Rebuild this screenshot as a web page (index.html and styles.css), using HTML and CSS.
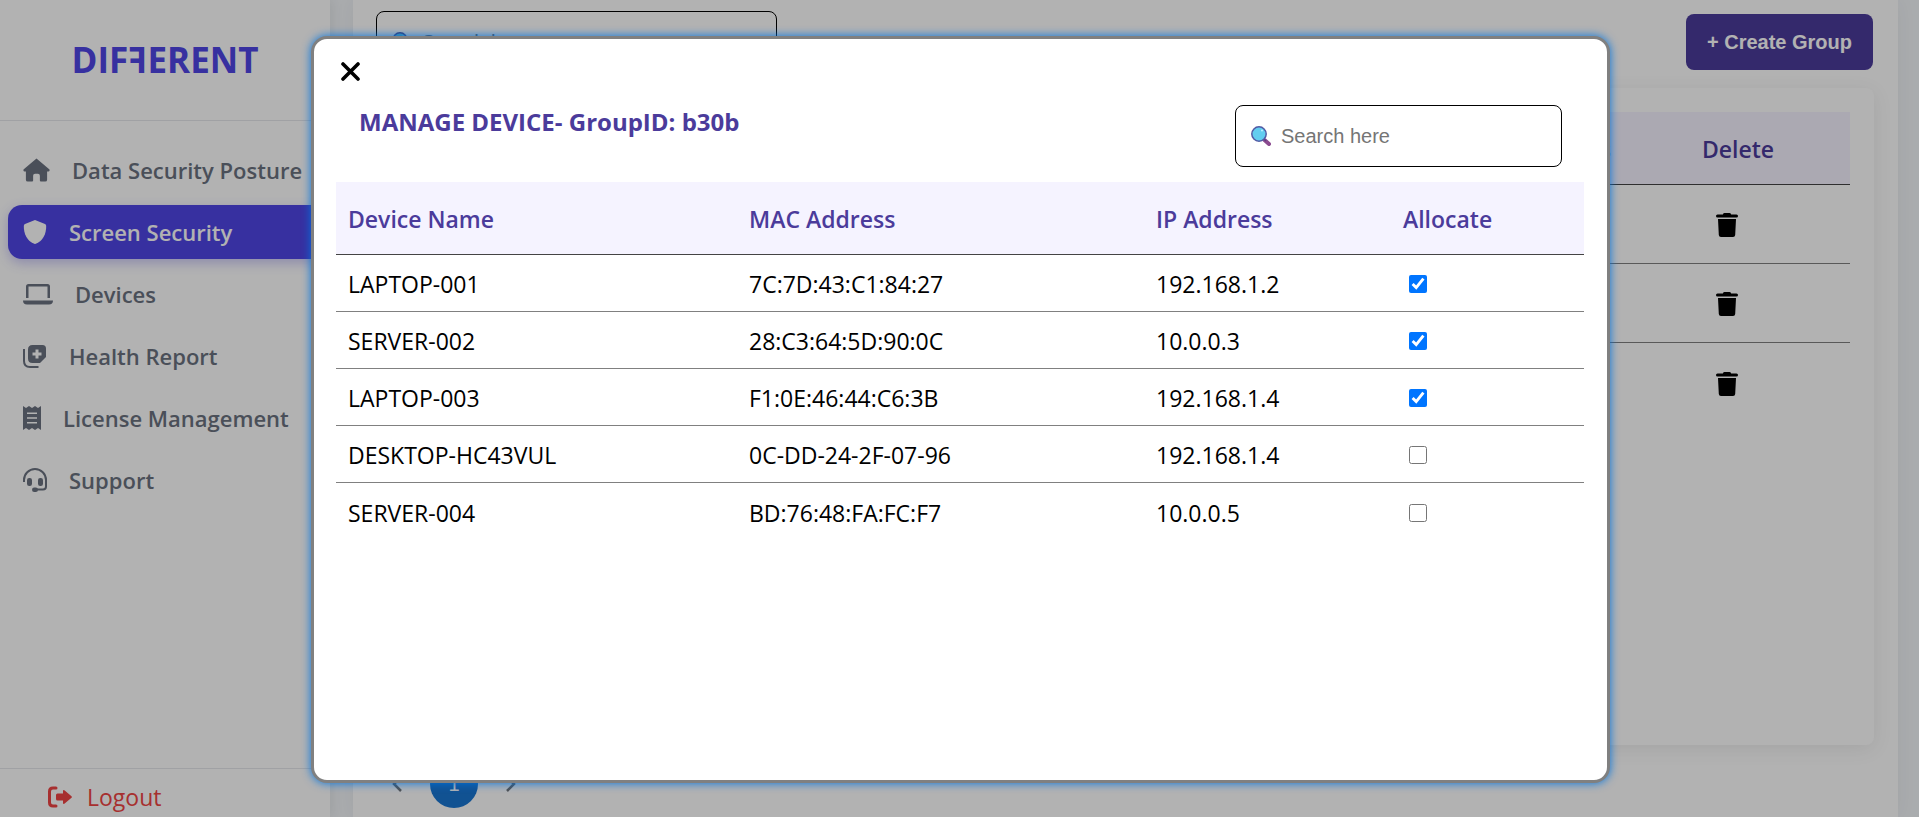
FILE: index.html
```html
<!DOCTYPE html>
<html lang="en">
<head>
<meta charset="utf-8">
<title>Screen Security</title>
<link rel="stylesheet" href="styles.css">
</head>
<body>
<svg class="sprite" aria-hidden="true">
  <symbol id="trash" viewBox="0 0 22 24"><path d="M7 1.200Q7.300 0 8.500 0h5q1.200 0 1.500 1.200L15.200 1.500H20.500Q22 1.500 22 3T20.500 4.500h-19Q0 4.500 0 3T1.500 1.500H6.800zM2 6h18l-.8 16q-.2 2-2.200 2H5q-2 0-2.200-2z"/></symbol>
  <symbol id="lens" viewBox="0 0 20 20"><path d="M13.500 14l4.500 4" stroke="#8b4a8f" stroke-width="4" stroke-linecap="round"/><path d="M12 12l3 3" stroke="#5d3f80" stroke-width="1.500"/><circle cx="8" cy="8" r="7.200" fill="#62cdf0" stroke="#515aa5" stroke-width="1.500"/><circle cx="11" cy="4.500" r="1" fill="#bdf0ff"/></symbol>
</svg>
<div class="app">
  <aside class="sidebar">
    <div class="brand"><span>DIF</span><span class="mirror">F</span><span>ERENT</span></div>
    <nav class="nav">
      <a class="item" href="#posture">
        <svg width="27" height="24" viewBox="0 0 28 24"><path d="M14 0L27.500 11.500Q28 13.500 26.500 13.500H25V22q0 2-2 2h-4.500q-1 0-1-1v-5q0-2-2-2h-3q-2 0-2 2v5q0 1-1 1H5q-2 0-2-2V13.500H1.500Q0 13.500.500 11.500z"/></svg>
        <span>Data Security Posture</span></a>
      <a class="item active" href="#screen">
        <svg width="24" height="24" viewBox="0 0 24 24"><path d="M12 0l10 4q1.200.600 1.200 2C23.200 14 20 21 12.800 23.800q-.8.300-1.600 0C4 21 .800 14 .800 6q0-1.400 1.200-2z"/></svg>
        <span>Screen Security</span></a>
      <a class="item" href="#devices">
        <svg width="30" height="24" viewBox="0 0 30 24"><path d="M3 16V4.500Q3 2 5.500 2h19Q27 2 27 4.500V16h-2.500V4.500h-19V16zM0 18.500h30q0 4-4 4H4q-4 0-4-4z"/></svg>
        <span>Devices</span></a>
      <a class="item" href="#health">
        <svg width="24" height="24" viewBox="0 0 24 24"><path fill-rule="evenodd" d="M9.500 1H19.500Q23 1 23 4.500V13l-6 6H9.500Q5 19 5 14.500V5.500Q5 1 9.500 1zM12.500 5.500v3h-3v3h3v3h3v-3h3v-3h-3v-3z"/><path d="M1 5v12q0 6 6 6h8.500" fill="none" stroke="currentColor" stroke-width="2"/></svg>
        <span>Health Report</span></a>
      <a class="item" href="#license">
        <svg width="18" height="24" viewBox="0 0 18 24"><path fill-rule="evenodd" d="M0 0l3 2 3-2 3 2 3-2 3 2 3-2v24l-3-2-3 2-3-2-3 2-3-2-3 2zM4 6.500v1.500h10V6.500zM4 11.200v1.500h10v-1.500zM4 16v1.500h10V16z"/></svg>
        <span>License Management</span></a>
      <a class="item" href="#support">
        <svg width="24" height="24" viewBox="0 0 24 24"><path d="M1 14v-2a11 11 0 0 1 22 0v6.500q0 3-3 3h-6" fill="none" stroke="currentColor" stroke-width="2"/><rect x="4" y="10" width="5" height="8" rx="2.200"/><rect x="15" y="10" width="5" height="8" rx="2.200"/><rect x="9" y="19.500" width="6" height="4.500" rx="2.200"/></svg>
        <span>Support</span></a>
    </nav>
    <div class="foot"><a class="logout" href="#logout">
      <svg width="24" height="24" viewBox="0 0 24 24"><path d="M8 3H5Q1.500 3 1.500 6.500v11Q1.500 21 5 21h3" fill="none" stroke="currentColor" stroke-width="3" stroke-linecap="round"/><path d="M15 5.500q.8-.9 1.700 0l6.800 5.700q.8.800 0 1.600l-6.800 5.700q-.9.900-1.700 0V15.500H9.500Q8 15.500 8 14v-4q0-1.500 1.500-1.500H15z"/></svg>
      <span>Logout</span></a></div>
  </aside>
  <main class="panel">
    <div class="toolbar">
      <label class="search wide"><svg width="20" height="20"><use href="#lens"/></svg><input type="text" placeholder="Search here" aria-label="Search groups"></label>
      <button class="create" type="button">+ Create Group</button>
    </div>
    <section class="card">
      <table class="groups">
        <colgroup><col><col class="c-devices"><col class="c-delete"></colgroup>
        <thead><tr><th></th><th class="end">Devices</th><th class="del">Delete</th></tr></thead>
        <tbody>
          <tr><td></td><td></td><td class="del"><button class="icon" type="button" aria-label="Delete group"><svg width="22" height="24"><use href="#trash"/></svg></button></td></tr>
          <tr><td></td><td></td><td class="del"><button class="icon" type="button" aria-label="Delete group"><svg width="22" height="24"><use href="#trash"/></svg></button></td></tr>
          <tr><td></td><td></td><td class="del"><button class="icon" type="button" aria-label="Delete group"><svg width="22" height="24"><use href="#trash"/></svg></button></td></tr>
        </tbody>
      </table>
    </section>
    <nav class="pager" aria-label="Pages">
      <button type="button" aria-label="Previous page"><svg width="12" height="18" viewBox="0 0 12 18"><path d="M10 2L3 9l7 7" fill="none" stroke="#757575" stroke-width="2.500"/></svg></button>
      <button type="button" class="current">1</button>
      <button type="button" aria-label="Next page"><svg width="12" height="18" viewBox="0 0 12 18"><path d="M2 2l7 7-7 7" fill="none" stroke="#757575" stroke-width="2.500"/></svg></button>
    </nav>
  </main>
</div>
<div class="overlay">
  <div class="modal" role="dialog" aria-modal="true" aria-labelledby="title">
    <button class="icon close" type="button" aria-label="Close"><svg width="19" height="19" viewBox="0 0 19 19"><path d="M2 2l15 15M17 2L2 17" stroke="#000" stroke-width="3.600" stroke-linecap="round"/></svg></button>
    <div class="head">
      <h2 id="title">MANAGE DEVICE- GroupID: b30b</h2>
      <label class="search"><svg width="20" height="20"><use href="#lens"/></svg><input type="text" placeholder="Search here" aria-label="Search devices"></label>
    </div>
    <table class="devices">
      <colgroup><col class="d-name"><col class="d-mac"><col class="d-ip"><col class="d-alloc"></colgroup>
      <thead><tr><th>Device Name</th><th>MAC Address</th><th>IP Address</th><th>Allocate</th></tr></thead>
      <tbody>
        <tr><td>LAPTOP-001</td><td>7C:7D:43:C1:84:27</td><td>192.168.1.2</td><td><input type="checkbox" aria-label="Allocate LAPTOP-001" checked></td></tr>
        <tr><td>SERVER-002</td><td>28:C3:64:5D:90:0C</td><td>10.0.0.3</td><td><input type="checkbox" aria-label="Allocate SERVER-002" checked></td></tr>
        <tr><td>LAPTOP-003</td><td>F1:0E:46:44:C6:3B</td><td>192.168.1.4</td><td><input type="checkbox" aria-label="Allocate LAPTOP-003" checked></td></tr>
        <tr><td>DESKTOP-HC43VUL</td><td>0C-DD-24-2F-07-96</td><td>192.168.1.4</td><td><input type="checkbox" aria-label="Allocate DESKTOP-HC43VUL"></td></tr>
        <tr><td>SERVER-004</td><td>BD:76:48:FA:FC:F7</td><td>10.0.0.5</td><td><input type="checkbox" aria-label="Allocate SERVER-004"></td></tr>
      </tbody>
    </table>
  </div>
</div>
</body>
</html>
```
FILE: styles.css
```css
* { box-sizing: border-box; }
body {
  margin: 0;
  background: #f3f6f9;
  color: #000;
  font-family: "Segoe UI", "Open Sans", "Noto Sans", sans-serif;
  font-size: 23px;
  overflow: hidden;
}
button, input { font-family: "Liberation Sans", Arial, sans-serif; }
.sprite { position: absolute; width: 0; height: 0; }
svg { display: block; flex: none; fill: currentColor; }

.app { display: flex; height: 100vh; padding-right: 21px; }

.sidebar {
  display: flex;
  flex-direction: column;
  flex: none;
  width: 330px;
  background: #fff;
  box-shadow: 2px 0 12px rgba(0, 0, 0, .08);
}
.brand {
  display: flex;
  justify-content: center;
  align-items: center;
  height: 121px;
  padding-bottom: 2px;
  border-bottom: 1px solid #e5e7eb;
  color: #4f46e5;
  font-size: 35px;
  font-weight: 700;
}
.mirror { transform: scaleX(-1); }
.nav {
  display: flex;
  flex-direction: column;
  flex: 1;
  gap: 8px;
  padding: 22px 0 0 8px;
}
.item {
  display: flex;
  align-items: center;
  gap: 22px;
  height: 54px;
  padding-left: 15px;
  border-radius: 14px;
  color: #6b7280;
  font-size: 22px;
  font-weight: 600;
  text-decoration: none;
  white-space: nowrap;
}
.active { background: #4f46e5; color: #fff; box-shadow: 0 4px 12px rgba(79, 70, 229, .3); }
.foot { padding: 12px 48px 4px; border-top: 1px solid #e5e7eb; }
.logout {
  display: flex;
  align-items: center;
  gap: 15px;
  color: #ef4444;
  line-height: 32px;
  text-decoration: none;
}

.panel {
  display: flex;
  flex-direction: column;
  flex: 1;
  margin-left: 23px;
  padding: 0 24px 0 23px;
  background: #fff;
  box-shadow: 0 0 20px rgba(0, 0, 0, .05);
}
.toolbar { display: flex; justify-content: space-between; align-items: flex-start; height: 88px; padding-top: 11px; }
.search {
  display: flex;
  align-items: center;
  gap: 10px;
  width: 327px;
  height: 62px;
  padding: 0 15px;
  border: 1px solid #000;
  border-radius: 8px;
}
.wide { width: 401px; }
.search input {
  flex: 1;
  min-width: 0;
  padding: 0;
  border: 0;
  outline: 0;
  background: none;
  font-size: 20px;
}
.search input::placeholder { color: #757575; }
.create {
  height: 56px;
  margin: 3px 1px 0 0;
  padding: 0 21px;
  border: 0;
  border-radius: 8px;
  background: #4b3b9b;
  color: #fff;
  font-size: 20px;
  font-weight: 700;
}
.card {
  height: 657px;
  padding: 24px;
  border-radius: 8px;
  box-shadow: 0 4px 20px rgba(0, 0, 0, .08);
}
table { width: 100%; border-collapse: separate; border-spacing: 0; table-layout: fixed; }
th {
  height: 73px;
  padding: 2px 12px 0;
  border-bottom: 1px solid #444;
  background: #f5f3ff;
  color: #4b3b9b;
  font-weight: 600;
  text-align: left;
}
td { padding: 2px 12px 0; border-bottom: 1px solid #808080; }
tbody tr:last-child td { border-bottom: 0; }
.groups td { height: 79px; }
.groups .end { padding-right: 0; text-align: right; }
.groups .del { padding-left: 91px; }
.groups td.del { padding-left: 105px; }
.c-devices { width: 280px; }
.c-delete { width: 239px; }
.icon { display: block; padding: 0; border: 0; background: none; color: #000; }

.pager { display: flex; align-items: center; gap: 13px; padding: 15px 0 0 1px; }
.pager button {
  display: grid;
  place-items: center;
  width: 40px;
  height: 40px;
  padding: 0;
  border: 0;
  border-radius: 50%;
  background: none;
  font-size: 20px;
}
.pager .current { width: 48px; height: 48px; background: #1976d2; color: #fff; }

.overlay {
  position: absolute;
  inset: 0;
  padding: 36px 309px 34px 311px;
  background: rgba(0, 0, 0, .3);
}
.modal {
  height: 100%;
  padding: 23px 23px 0 22px;
  border: 3px solid #808080;
  border-radius: 16px;
  background: #fff;
  box-shadow: 0 0 10px #0074e0;
}
.close { padding-left: 5px; }
.head { display: flex; justify-content: space-between; padding: 24px 22px 15px 23px; }
.head h2 { margin: 0; color: #4b3b9b; font-size: 24px; font-weight: 700; line-height: 34px; }
.devices td { height: 57px; }
.devices input { display: block; width: 18px; height: 18px; margin: 0 6px; }
.d-name { width: 401px; }
.d-mac { width: 407px; }
.d-ip { width: 247px; }
.d-alloc { width: 193px; }
```
